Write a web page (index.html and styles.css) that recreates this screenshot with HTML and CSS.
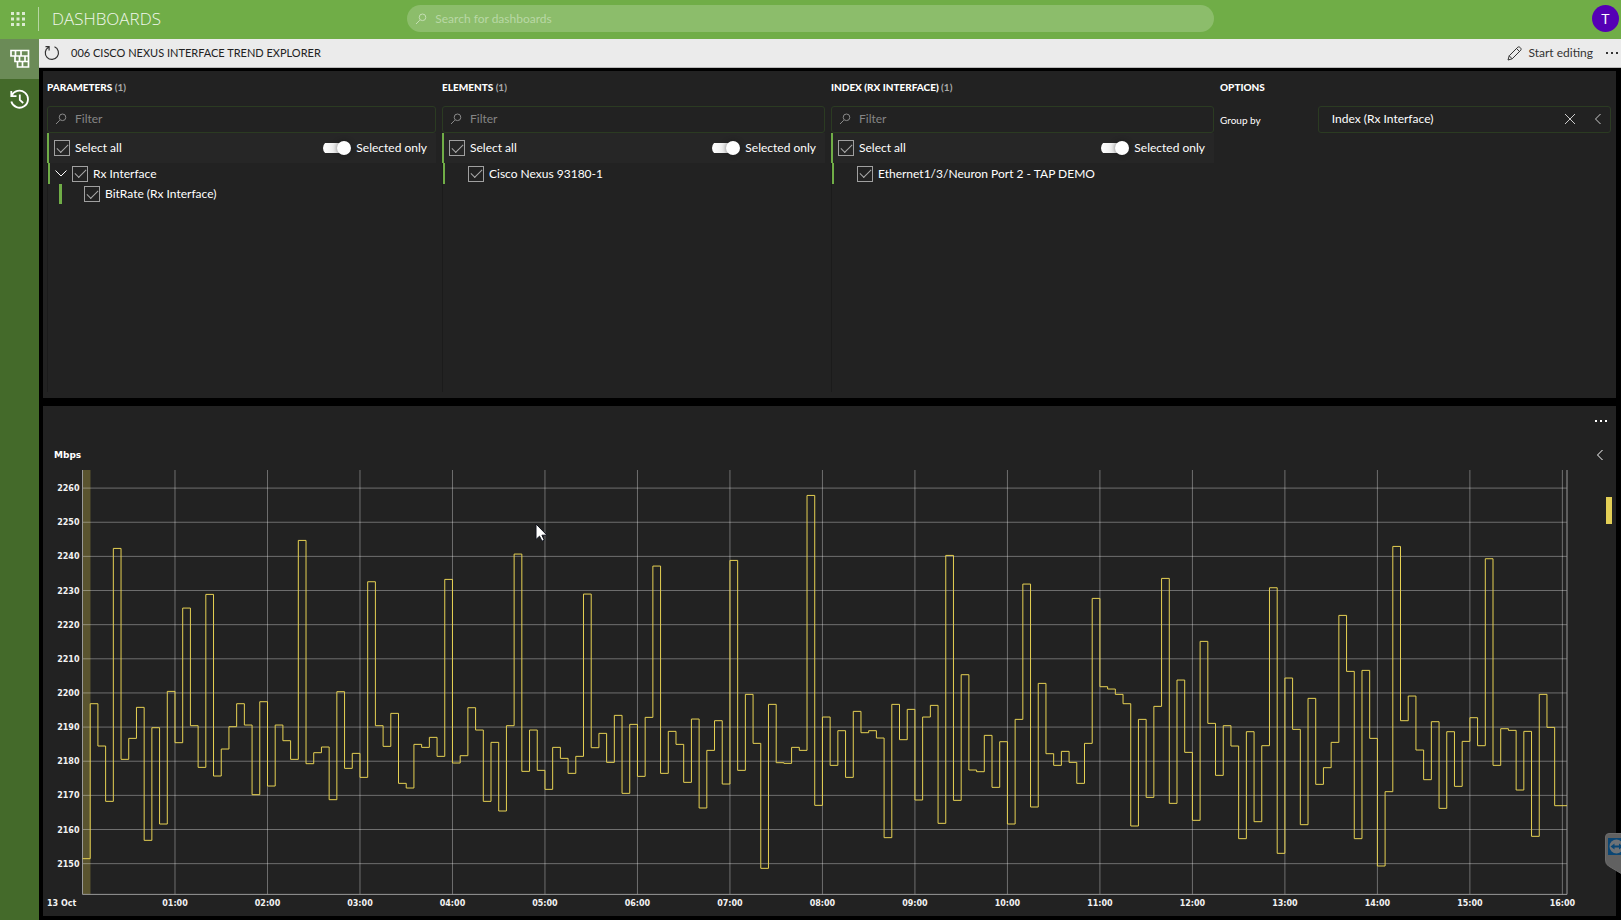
FILE: index.html
```html
<!DOCTYPE html>
<html lang="en">
<head>
<meta charset="utf-8">
<title>Dashboards</title>
<link rel="stylesheet" href="styles.css">
</head>
<body>
<svg class="defs" aria-hidden="true">
  <symbol id="i-search" viewBox="0 0 12 12"><path d="M1 11 4.8 7.2M4.2 4.3a3.3 3.3 0 1 1 6.6 0a3.3 3.3 0 1 1-6.6 0z"/></symbol>
  <symbol id="i-left" viewBox="0 0 8 12"><path d="M6.5 1 1.5 6l5 5"/></symbol>
  <symbol id="i-down" viewBox="0 0 14 9"><path d="M1.5 1.500 7 7l5.500-5.500"/></symbol>
</svg>

<header class="topbar">
  <div class="brand">
    <button class="apps" aria-label="Apps">
      <svg width="14" height="14" viewBox="0 0 14 14"><path d="M0 0h3v3H0zM5.500 0h3v3h-3zM11 0h3v3h-3zM0 5.500h3v3H0zM5.500 5.500h3v3h-3zM11 5.500h3v3h-3zM0 11h3v3H0zM5.500 11h3v3h-3zM11 11h3v3h-3z"/></svg>
    </button>
    <h1 class="title">DASHBOARDS</h1>
  </div>
  <label class="search">
    <svg class="icon" width="12" height="12"><use href="#i-search"/></svg>
    <input type="text" placeholder="Search for dashboards" aria-label="Search for dashboards">
  </label>
  <button class="avatar">T</button>
</header>

<div class="shell">
  <nav class="rail">
    <a class="rail-item active" href="#" aria-label="Dashboards">
      <svg width="20" height="20" viewBox="0 0 20 20" fill="none" stroke="#fff" stroke-width="1.700"><path d="M1 1.500h17.500v16.500h-11v-5.500h-2.500v-5.500h-4zM1 7h17.500M5 12.500h13.500M5.500 1.500v5.500M11 1.500v5.500M9.500 7v5.500M15 7v5.500M12.500 12.500v5.500"/></svg>
    </a>
    <a class="rail-item" href="#" aria-label="History">
      <svg width="20" height="20" viewBox="0 0 20 20" fill="none" stroke="#fff" stroke-width="1.800"><path d="M1.300 2v5.200h5.200M1.600 7a8.500 8.500 0 1 1-.3 5.500M9.800 5.500v5.300l3.400 3.200"/></svg>
    </a>
  </nav>

  <main class="main">
    <div class="toolbar">
      <button class="tool" aria-label="Refresh">
        <svg width="16" height="16" viewBox="0 0 16 16" fill="none" stroke="#333" stroke-width="1.200"><path d="M10.500 1.800A6.600 6.600 0 1 1 4.500 2.200M1.500 1.600h3.600v3.800"/></svg>
      </button>
      <h2 class="page-name">006 CISCO NEXUS INTERFACE TREND EXPLORER</h2>
      <button class="tool edit">
        <svg width="15" height="15" viewBox="0 0 15 15" fill="none" stroke="#333"><path d="M1 14l1.200-4.200L10.800 1.200c1.500-1.200 4.200 1.400 3 3L5.200 12.800zM9.500 2.500l3 3M2.200 9.800l3 3"/></svg>
        Start editing
      </button>
      <button class="tool more" aria-label="More">
        <svg width="14" height="4" viewBox="0 0 14 4" fill="#333"><path d="M1 1h2v2H1zM6 1h2v2H6zM11 1h2v2h-2z"/></svg>
      </button>
    </div>

    <div class="board">
      <section class="panel filters">
        <div class="col">
          <h3>PARAMETERS <span>(1)</span></h3>
          <label class="filter"><svg class="icon" width="12" height="12"><use href="#i-search"/></svg><input type="text" placeholder="Filter" aria-label="Filter parameters"></label>
          <div class="list">
            <div class="all">
              <label><input type="checkbox" class="box" checked>Select all</label>
              <label class="only"><input type="checkbox" class="switch" checked>Selected only</label>
            </div>
            <div class="row parent">
              <button class="expand" aria-label="Collapse"><svg class="icon" width="14" height="9"><use href="#i-down"/></svg></button>
              <label><input type="checkbox" class="box" checked>Rx Interface</label>
            </div>
            <div class="row child"><label><input type="checkbox" class="box" checked>BitRate (Rx Interface)</label></div>
          </div>
        </div>
        <div class="col">
          <h3>ELEMENTS <span>(1)</span></h3>
          <label class="filter"><svg class="icon" width="12" height="12"><use href="#i-search"/></svg><input type="text" placeholder="Filter" aria-label="Filter elements"></label>
          <div class="list">
            <div class="all">
              <label><input type="checkbox" class="box" checked>Select all</label>
              <label class="only"><input type="checkbox" class="switch" checked>Selected only</label>
            </div>
            <div class="row"><label><input type="checkbox" class="box" checked>Cisco Nexus 93180-1</label></div>
          </div>
        </div>
        <div class="col">
          <h3>INDEX (RX INTERFACE) <span>(1)</span></h3>
          <label class="filter"><svg class="icon" width="12" height="12"><use href="#i-search"/></svg><input type="text" placeholder="Filter" aria-label="Filter index"></label>
          <div class="list">
            <div class="all">
              <label><input type="checkbox" class="box" checked>Select all</label>
              <label class="only"><input type="checkbox" class="switch" checked>Selected only</label>
            </div>
            <div class="row"><label><input type="checkbox" class="box" checked>Ethernet1/3/Neuron Port 2 - TAP DEMO</label></div>
          </div>
        </div>
        <div class="col">
          <h3>OPTIONS</h3>
          <div class="option">
            <label for="group">Group by</label>
            <div class="picker">
              <select id="group"><option>Index (Rx Interface)</option></select>
              <button aria-label="Clear"><svg class="icon" width="12" height="12" viewBox="0 0 12 12"><path d="M1 1l10 10M11 1 1 11"/></svg></button>
              <svg class="icon" width="8" height="12"><use href="#i-left"/></svg>
            </div>
          </div>
        </div>
      </section>

      <section class="panel trend">
        <div class="trend-head">
          <button aria-label="Chart menu"><svg width="14" height="4" viewBox="0 0 14 4" fill="#fff"><path d="M1 1h2v2H1zM6 1h2v2H6zM11 1h2v2h-2z"/></svg></button>
        </div>
        <div class="trend-body">
          <div class="chart"><svg id="chart" role="img" aria-label="BitRate trend"></svg></div>
          <aside class="legend">
            <button aria-label="Open legend"><svg class="icon" width="8" height="12"><use href="#i-left"/></svg></button>
            <i class="swatch"></i>
          </aside>
        </div>
      </section>
    </div>
  </main>
</div>

<svg class="cursor" width="13" height="20" viewBox="0 0 13 20"><path d="M1 1v15.500l3.500-3.300 2.500 5 2.300-1-2.400-5H12z" fill="#fff" stroke="#10131c"/></svg>
<svg class="remote" width="16" height="42" viewBox="0 0 16 42"><path d="M17 .5H4Q.5.500.5 4v23q0 4 3 6l13.500 8z" fill="#616161" stroke="#6c6c6c"/><path d="M3 5h13v17H3z" fill="#0a4674"/><circle cx="11.500" cy="13.500" r="7" fill="#6e7276"/><path d="M5.500 13.500l4-3v2h4.500v-2l4 3-4 3v-2H9.500v2z" fill="#0a4674"/></svg>

<script src="chart.js"></script>
</body>
</html>
```
FILE: styles.css
```css
* { box-sizing: border-box; }
html, body { height: 100%; }
body {
  margin: 0;
  display: flex;
  flex-direction: column;
  overflow: hidden;
  background: #000;
  color: #fff;
  font: 12px/16px Lato, "Open Sans", sans-serif;
}
h1, h2, h3 { margin: 0; font-weight: 400; }
button, input, select { font: inherit; color: inherit; background: none; border: 0; padding: 0; margin: 0; }
button { display: inline-flex; align-items: center; justify-content: center; }
input:focus, select:focus { outline: none; }
.defs { display: none; }
.icon { fill: none; stroke: currentColor; flex: none; }

.topbar {
  flex: none;
  height: 39px;
  display: grid;
  grid-template-columns: 1fr calc(50% - 4px) 1fr;
  align-items: center;
  padding-bottom: 2px;
  background: #70ad47;
}
.brand { display: flex; align-items: center; }
.apps { width: 39px; height: 24px; padding-right: 3px; fill: #dcebd1; border-right: 1px solid #b7d6a3; }
.title { padding-left: 13px; font: 300 17px/24px "Open Sans", sans-serif; color: #f0f7ec; }
.search {
  height: 27px;
  display: flex;
  align-items: center;
  gap: 8px;
  padding: 0 8px;
  border-radius: 14px;
  background: #8cbd6b;
  color: #c5dfb4;
}
.search input { flex: 1; min-width: 0; }
.search input::placeholder { color: #b9d8a5; opacity: 1; }
.avatar { justify-self: end; width: 27px; height: 27px; margin-right: 2px; border-radius: 50%; background: #5500b5; font-size: 14px; }

.shell { flex: 1; min-height: 0; display: flex; }
.rail { flex: none; width: 39px; background: #446a2a; }
.rail-item { height: 40px; display: flex; align-items: center; justify-content: center; }
.rail-item.active { background: #6b8b57; }
.main { flex: 1; min-width: 0; display: flex; flex-direction: column; }

.toolbar {
  flex: none;
  height: 29px;
  display: flex;
  align-items: center;
  padding: 0 2px 0 5px;
  background: #ebebeb;
  border-bottom: 1px solid #bbb;
  color: #333;
}
.tool { gap: 6px; }
.page-name { flex: 1; padding-left: 11px; font-size: 11px; color: #222; }
.more { margin-left: 12px; }

.board {
  flex: 1;
  min-height: 0;
  display: grid;
  grid-template-rows: 327fr 511fr;
  gap: 8px;
  padding: 3px 5px 4px 4px;
}
.panel { min-height: 0; background: #222; }

.filters { display: grid; grid-template-columns: 389fr 383fr 383fr 391fr; gap: 6px; padding: 8px 5px 6px 4px; }
.col { min-width: 0; display: flex; flex-direction: column; }
.col h3 { font-size: 10px; line-height: 16px; font-weight: 900; margin-bottom: 11px; }
.col h3 span { color: #aaa; font-weight: 700; }
.filter {
  height: 27px;
  display: flex;
  align-items: center;
  gap: 8px;
  padding: 0 7px 2px;
  border: 1px solid #2b3b22;
  border-radius: 3px;
  color: #8a8a8a;
}
.filter input { flex: 1; min-width: 0; }
.filter input::placeholder { color: #858585; opacity: 1; }
.list { flex: 1; border-left: 1px solid #1b1b1b; }
.all {
  height: 30px;
  margin-left: -1px;
  display: flex;
  align-items: center;
  justify-content: space-between;
  padding: 0 9px 0 5px;
  border-left: 2px solid #70ad47;
  background: #262626;
}
.all label, .row label { display: flex; align-items: center; gap: 5px; white-space: nowrap; }
.row { height: 21px; display: flex; align-items: center; padding-left: 23px; border-left: 2px solid #70ad47; }
.row.parent { padding-left: 4px; }
.expand { width: 14px; margin-right: 4px; }
.row.child { height: 20px; margin-left: 11px; padding-left: 22px; border-left-width: 3px; }
.box {
  appearance: none;
  width: 16px;
  height: 16px;
  border: 1px solid #a0a0a0;
  display: grid;
  place-items: center;
}
.box:checked::before {
  content: "";
  width: 10px;
  height: 5px;
  margin-bottom: 3px;
  border: solid #aaa;
  border-width: 0 0 1px 1px;
  rotate: -45deg;
}
.switch {
  appearance: none;
  width: 28px;
  height: 14px;
  display: flex;
  align-items: center;
  background: linear-gradient(90deg, #fff, #ddd) 0 2px / 24px 10px no-repeat;
  border-radius: 7px;
}
.switch::before { content: ""; width: 14px; height: 14px; margin-left: 14px; border-radius: 50%; background: #fff; box-shadow: 0 0 5px #1118; }

.option { display: flex; align-items: center; font-size: 10px; }
.option > label { flex: 1; }
.picker {
  width: 75%;
  height: 27px;
  display: flex;
  align-items: center;
  gap: 18px;
  padding: 0 8px 2px 13px;
  border: 1px solid #2b3b22;
  border-radius: 3px;
  font-size: 12px;
}
.picker select { flex: 1; min-width: 0; appearance: none; }
.picker .icon { color: #ccc; }

.trend { display: flex; flex-direction: column; }
.trend-head { flex: none; height: 31px; display: flex; justify-content: flex-end; align-items: center; padding-right: 8px; }
.trend-body { flex: 1; min-height: 0; display: flex; }
.chart { flex: 1; min-width: 0; }
.chart svg { display: block; width: 100%; height: 100%; }
.legend { flex: none; width: 26px; display: flex; flex-direction: column; align-items: center; padding-top: 12px; }
.legend button { height: 12px; align-self: flex-start; margin-left: 6px; }
.swatch { width: 6px; height: 27px; margin-top: 36px; margin-right: 4px; align-self: flex-end; background: #e3cf56; }

.grid { stroke: #fff; stroke-opacity: .35; }
.axis { stroke: #999; fill: none; }
.series { stroke: #e6d153; fill: none; }
.band { fill: #dfca51; fill-opacity: .3; }
.tick { font: 700 8px "DejaVu Sans", sans-serif; fill: #f2f2f2; }
.unit { font: 700 9px "DejaVu Sans", sans-serif; fill: #fff; }

.cursor { position: absolute; left: 535px; top: 523px; }
.remote { position: absolute; right: 0; top: 833px; }
```
FILE: chart.js
```js
const NS = 'http://www.w3.org/2000/svg';
const svg = document.getElementById('chart');

// Five-minute samples, stored as depth below the 2260 line; 10.245 units = 1 Mbps, offset 84.
const raw = [
  1196,731,858,1024,265,898,835,742,1141,803,1092,694,
  848,444,797,922,403,948,867,800,731,795,1004,725,
  978,795,842,898,241,911,878,861,1019,695,925,880,
  952,365,797,859,760,970,984,853,862,832,889,358,
  909,887,743,810,1024,847,1053,797,282,934,810,931,
  988,862,895,940,889,402,863,820,907,766,1000,793,
  949,772,318,940,814,853,967,777,1044,871,782,972,
  301,931,703,850,1225,733,908,910,862,871,106,1036,
  771,916,812,952,754,818,812,834,1133,733,839,748,
  1020,771,736,1090,286,1021,644,930,935,826,982,845,
  1092,778,372,1041,670,881,916,874,907,970,850,415,
  680,687,703,731,1098,778,1012,739,355,1030,660,877,
  1081,544,790,946,797,858,1136,815,1085,857,383,1180,
  654,808,1094,715,973,923,847,466,634,1136,631,835,
  1218,995,259,782,708,870,959,785,1045,815,979,844,
  773,857,296,916,806,811,990,814,1129,703,802,1037
];
const samples = raw.map(r => 2260 - (r - 84) / 10.245);
const HOURS = 16.05, TOP = 2265.3, BOTTOM = 2141;

function add(tag, attrs, text) {
  const el = document.createElementNS(NS, tag);
  for (const k in attrs) el.setAttribute(k, attrs[k]);
  if (text) el.textContent = text;
  svg.appendChild(el);
}

function draw() {
  svg.replaceChildren();
  const { width, height } = svg.getBoundingClientRect();
  const left = 39.5, right = width - 23, top = 33, bottom = height - 22;
  const x = h => left + (right - left) * h / HOURS;
  const y = v => top + (bottom - top) * (TOP - v) / (TOP - BOTTOM);

  add('text', { x: 11, y: 21, class: 'unit' }, 'Mbps');
  add('rect', { x: left, y: top, width: 8, height: bottom - top, class: 'band' });
  for (let v = 2150; v <= 2260; v += 10) {
    add('path', { d: `M${left} ${y(v)}H${right}`, class: 'grid' });
    add('text', { x: left - 3, y: y(v) + 3, 'text-anchor': 'end', class: 'tick' }, String(v));
  }
  add('text', { x: 4, y: bottom + 12, class: 'tick' }, '13 Oct');
  for (let h = 1; h <= 16; h++) {
    add('path', { d: `M${x(h)} ${top}V${bottom}`, class: 'grid' });
    add('text', { x: x(h), y: bottom + 12, 'text-anchor': 'middle', class: 'tick' }, String(h).padStart(2, '0') + ':00');
  }
  add('path', { d: `M${left} ${top}V${bottom}H${right}V${top}`, class: 'axis' });
  let d = '';
  samples.forEach((v, i) => {
    const end = i === samples.length - 1 ? right : x((i + 1) / 12);
    d += `${i ? 'V' + y(v) : 'M' + left + ' ' + y(v)}H${end}`;
  });
  add('path', { d, class: 'series' });
}
draw();
addEventListener('resize', draw);
```
